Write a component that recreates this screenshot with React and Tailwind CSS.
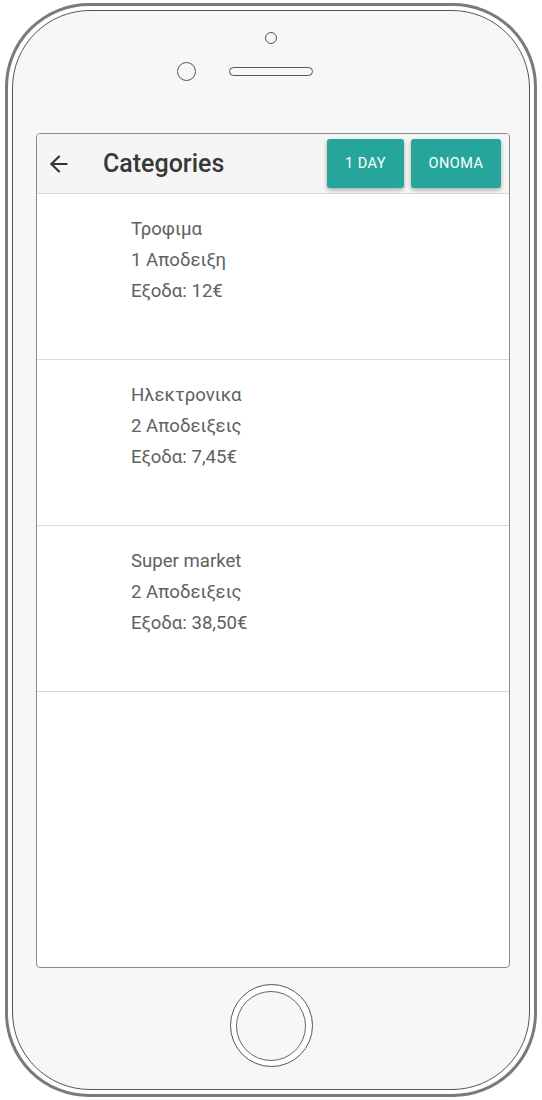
import { ArrowLeft } from 'lucide-react'

const CATEGORIES = [
  { name: 'Τροφιμα', receipts: '1 Αποδειξη', total: 'Εξοδα: 12€' },
  { name: 'Ηλεκτρονικα', receipts: '2 Αποδειξεις', total: 'Εξοδα: 7,45€' },
  { name: 'Super market', receipts: '2 Αποδειξεις', total: 'Εξοδα: 38,50€' },
]

function CategoryRow({ item }) {
  return (
    <div className="h-[166px] border-b border-[#dadada] pl-[94px] pt-[20px] text-[18.6px] leading-[31px] text-[#616161]">
      <p>{item.name}</p>
      <p>{item.receipts}</p>
      <p>{item.total}</p>
    </div>
  )
}

export default function App() {
  return (
    <div className="min-h-[1100px] bg-white font-['Roboto',sans-serif]">
      {/* phone shell */}
      <div className="ml-[5px] pt-[3px]">
        <div className="h-[1094px] w-[532px] rounded-[84px] border-[3px] border-[#7a7a7a] bg-white p-[4px]">
          <div className="flex h-full flex-col rounded-[78px] border border-[#555] bg-[#f7f7f7]">
            {/* earpiece + camera */}
            <div className="flex h-[122px] flex-col items-center">
              <div className="mt-[21px] h-[12px] w-[12px] rounded-full border-[1.5px] border-[#555]" />
              <div className="mt-[18px] flex items-center gap-[33px]">
                <div className="h-[19px] w-[19px] rounded-full border-[1.5px] border-[#555]" />
                <div className="h-[9px] w-[84px] rounded-full border-[1.5px] border-[#555]" />
                <div className="h-[19px] w-[19px]" />
              </div>
            </div>

            {/* screen */}
            <div className="ml-[23px] flex h-[835px] w-[474px] flex-col overflow-hidden rounded-[4px] border border-[#8a8a8a] bg-white">
              <div className="flex h-[60px] shrink-0 items-center border-b border-[#d8d8d8] bg-[#f5f5f5] pr-[8px]">
                <ArrowLeft className="ml-[9px] h-[26px] w-[26px] text-[#333]" strokeWidth={2} />
                <h1 className="ml-[31px] text-[25px] font-medium text-[#383838]">Categories</h1>
                <div className="ml-auto flex gap-[7px]">
                  <button className="h-[49px] w-[77px] rounded-[3px] bg-[#26a69a] text-[14.5px] tracking-[0.5px] text-white shadow-[0_2px_4px_rgba(0,0,0,0.3)]">
                    1 DAY
                  </button>
                  <button className="h-[49px] w-[90px] rounded-[3px] bg-[#26a69a] text-[14.5px] tracking-[0.5px] text-white shadow-[0_2px_4px_rgba(0,0,0,0.3)]">
                    ONOMA
                  </button>
                </div>
              </div>
              {CATEGORIES.map((c) => (
                <CategoryRow key={c.name} item={c} />
              ))}
            </div>

            {/* home button */}
            <div className="mt-[16px] flex justify-center">
              <div className="flex h-[83px] w-[83px] items-center justify-center rounded-full border-[1.5px] border-[#555] bg-white">
                <div className="h-[70px] w-[70px] rounded-full border-[1.5px] border-[#666] bg-[#f7f7f7]" />
              </div>
            </div>
          </div>
        </div>
      </div>
    </div>
  )
}
